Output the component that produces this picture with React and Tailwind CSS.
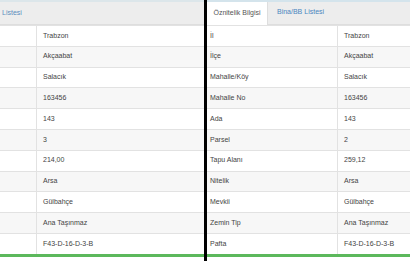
import React from 'react';

const rowsLeft = [
  'Trabzon', 'Akçaabat', 'Salacık', '163456', '143', '3', '214,00', 'Arsa', 'Gülbahçe', 'Ana Taşınmaz', 'F43-D-16-D-3-B',
];

const rowsRight = [
  ['İl', 'Trabzon'],
  ['İlçe', 'Akçaabat'],
  ['Mahalle/Köy', 'Salacık'],
  ['Mahalle No', '163456'],
  ['Ada', '143'],
  ['Parsel', '2'],
  ['Tapu Alanı', '259,12'],
  ['Nitelik', 'Arsa'],
  ['Mevkii', 'Gülbahçe'],
  ['Zemin Tip', 'Ana Taşınmaz'],
  ['Pafta', 'F43-D-16-D-3-B'],
];

const Row = ({ i, labelWidth, label, value, labelPad }) => (
  <div className={`flex h-[20.8px] border-t border-[#e2e2e2] ${i % 2 === 1 ? 'bg-[#f7f7f7]' : 'bg-white'}`}>
    <div className={`${labelWidth} ${labelPad} shrink-0 border-r border-[#e2e2e2] flex items-center`}>{label}</div>
    <div className="flex-1 pl-[6px] flex items-center whitespace-nowrap">{value}</div>
  </div>
);

const LeftPanel = () => (
  <div className="w-[204px] shrink-0 flex flex-col bg-white overflow-hidden">
    <div className="h-[25px] shrink-0 bg-[#ededed] border-t-2 border-[#dce6ea] border-b border-b-[#dedede] flex items-center">
      <span className="pl-[2px] text-[#5b8dbd]">Listesi</span>
    </div>
    {rowsLeft.map((v, i) => (
      <Row key={i} i={i} labelWidth="w-[37px]" labelPad="" label="" value={v} />
    ))}
    <div className="h-[3px] shrink-0 bg-[#5cb85c]" />
    <div className="flex-1" />
  </div>
);

const RightPanel = () => (
  <div className="flex-1 flex flex-col bg-white overflow-hidden">
    <div className="h-[25px] shrink-0 bg-[#ededed] border-t-2 border-[#d4e4ec] border-b border-b-[#dedede] flex items-end">
      <div className="h-[23px] w-[61px] bg-white border-r border-[#dedede] -mb-px flex items-center justify-center text-[#555]">
        Öznitelik Bilgisi
      </div>
      <div className="h-[23px] pl-[9px] flex items-center text-[#4a86c0]">Bina/BB Listesi</div>
    </div>
    {rowsRight.map(([l, v], i) => (
      <Row key={i} i={i} labelWidth="w-[131px]" labelPad="pl-[3px]" label={l} value={v} />
    ))}
    <div className="h-[3px] shrink-0 bg-[#5cb85c]" />
    <div className="flex-1" />
  </div>
);

export default function App() {
  return (
    <div
      className="w-[410px] h-[261px] flex bg-white text-[7px] text-[#444] overflow-hidden"
      style={{ fontFamily: '"Liberation Sans", Arial, sans-serif' }}
    >
      <LeftPanel />
      <div className="w-[3px] shrink-0 bg-black" />
      <RightPanel />
    </div>
  );
}
